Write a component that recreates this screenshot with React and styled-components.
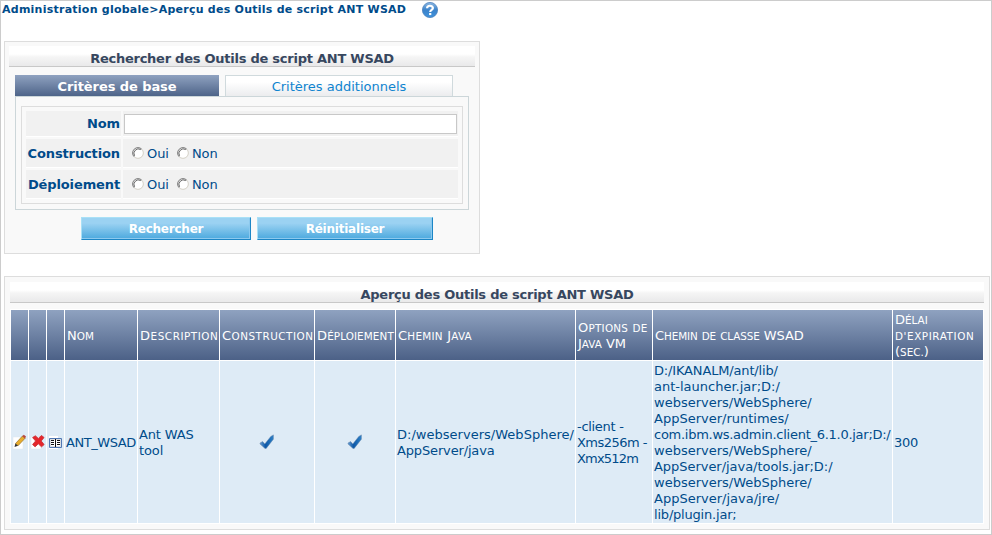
import React from "react";
import styled, { createGlobalStyle } from "styled-components";

const Global = createGlobalStyle`
  *, *::before, *::after { box-sizing: border-box; }
  html, body { margin: 0; padding: 0; background: #fff; }
  body {
    font-family: "DejaVu Sans", Verdana, sans-serif;
    font-size: 13px;
    line-height: 16px;
    color: #004b8a;
  }
`;

const Page = styled.div`
  width: 992px;
  height: 535px;
  border: 1px solid #ccc;
  padding: 0 1px 0 3px;
  overflow: hidden;
`;

const Breadcrumb = styled.header`
  display: flex;
  align-items: center;
  gap: 14px;
  height: 18px;
  margin: 0 0 22px -2px;
  font-size: 11px;
  font-weight: bold;
  white-space: nowrap;
`;

const Crumbs = styled.span`
  width: 406px;
  height: 18px;
  line-height: 17px;
  letter-spacing: 0.245px;
`;

const Panel = styled.section`
  width: ${(p) => p.$w}px;
  height: ${(p) => p.$h}px;
  margin-bottom: 22px;
  border: 1px solid #ddd;
  background: #f9f9f9;
  padding: ${(p) => p.$pad};
`;

const Title = styled.h2`
  margin: 0;
  height: 21px;
  border-bottom: 1px solid #c8c8c8;
  background: linear-gradient(#fff 0, #fff 40%, #f5f5f5 55%, #e9e9ea 100%);
  color: #37475f;
  font-size: 13px;
  line-height: 25px;
  font-weight: bold;
  text-align: center;
  white-space: nowrap;
  letter-spacing: -0.25px;
`;

const Tabs = styled.div`
  display: flex;
  gap: 6px;
  margin: 8px 0 0 6px;
`;

const Tab = styled.div`
  width: ${(p) => p.$w}px;
  height: 21px;
  line-height: 22px;
  text-align: center;
  white-space: nowrap;
  letter-spacing: ${(p) => (p.$active ? "-0.08px" : "0")};
  color: ${(p) => (p.$active ? "#fff" : "#0f84cf")};
  font-weight: ${(p) => (p.$active ? "bold" : "normal")};
  border: 1px solid ${(p) => (p.$active ? "transparent" : "#d0dadd")};
  border-bottom: 0;
  background: ${(p) =>
    p.$active
      ? "linear-gradient(#8fa2c0, #4e6489) border-box"
      : "linear-gradient(#fff 30%, #ebecee)"};
`;

const TabBody = styled.div`
  width: 454px;
  height: 114px;
  margin-left: 6px;
  padding: 9px 5px 5px;
  border: 1px solid #ccd6d9;
`;

const Criteria = styled.div`
  display: grid;
  grid-template-columns: 95px 335px;
  grid-template-rows: 26px 29px 29px;
  gap: 2px;
  height: 98px;
  padding: 4px;
  border: 1px solid #ddd;
`;

const Label = styled.label`
  display: flex;
  align-items: center;
  justify-content: flex-end;
  padding: ${(p) => (p.$low ? "2px 1px 0 0" : "0 1px 0 0")};
  background: #f1f1f1;
  border-bottom: 1px solid #fff;
  font-weight: bold;
  white-space: nowrap;
  letter-spacing: -0.12px;
`;

const Field = styled.div`
  display: flex;
  align-items: ${(p) => (p.$radios ? "center" : "flex-start")};
  padding: ${(p) => (p.$radios ? "1px 0 0 9px" : "3px 1px 0")};
  background: #f1f1f1;
  border-bottom: 1px solid #fff;
`;

const Input = styled.input`
  width: 333px;
  height: 20px;
  border: 1px solid #c8c8c8;
  background: #fff;
  padding: 0 3px;
  font: inherit;
  outline: 0;
`;

const Option = styled.span`
  display: flex;
  align-items: flex-start;
  gap: 3px;
  width: 45px;
  white-space: nowrap;
  letter-spacing: -0.1px;

  svg { margin-top: 1px; }
`;

const Buttons = styled.div`
  display: flex;
  gap: 6px;
  margin: 7px 0 0 72px;
`;

const Button = styled.button`
  width: ${(p) => p.$w}px;
  height: 23px;
  padding: 1px 0 0;
  border: 1px solid;
  border-color: #a9e0f6 #1c86c6 #1c86c6 #a9e0f6;
  box-shadow: inset -1px -1px #8cc9ee;
  background: linear-gradient(#9bd2f2 25%, #4ca9de);
  color: #fff;
  font: bold 12px/20px "DejaVu Sans", Verdana, sans-serif;
  letter-spacing: -0.22px;
`;

const Table = styled.div`
  display: grid;
  grid-template-columns: 17px 17px 17px 72px 81px 94px 80px 179px 76px 239px 90px;
  grid-template-rows: 50px 162px;
  gap: 1px;
  width: 974px;
  margin-top: 6px;
  padding: 1px;
  background: #fff;
`;

const Head = styled.div`
  display: flex;
  flex-direction: column;
  justify-content: center;
  padding: 2px 0 0 2px;
  background: linear-gradient(#8fa2c0, #4c6187);
  color: #fff;
`;

const Small = styled.span`
  font-size: 10.4px;
  text-transform: uppercase;
`;

const Cell = styled.div`
  display: flex;
  flex-direction: column;
  justify-content: center;
  align-items: ${(p) => (p.$icon ? "center" : "flex-start")};
  padding: ${(p) => (p.$icon ? "0" : "2px 0 0 1px")};
  background: #deebf6;
`;

const Line = styled.span`
  display: block;
  height: 16px;
  white-space: nowrap;
  letter-spacing: ${(p) => p.$ls || 0}px;
`;

const HelpIcon = () => (
  <svg width="16" height="16" viewBox="0 0 16 16">
    <defs>
      <linearGradient id="help" x1="0" y1="0" x2="0" y2="1">
        <stop offset="0" stopColor="#8fb9e3" />
        <stop offset=".5" stopColor="#3b83cb" />
        <stop offset="1" stopColor="#3f93dc" />
      </linearGradient>
    </defs>
    <circle cx="8" cy="8" r="7.6" fill="url(#help)" stroke="#4c82bd" strokeWidth=".8" />
    <path d="M5.1 6.3C5.1 2.9 10.9 3 10.9 6.1C10.9 8 8.2 7.9 8.2 10" fill="none" stroke="#fff" strokeWidth="2.2" />
    <rect x="7.1" y="11" width="2.2" height="2.1" fill="#fff" />
  </svg>
);

const Radio = () => (
  <svg width="12" height="12" viewBox="0 0 12 12">
    <circle cx="6" cy="6" r="5" fill="#fff" />
    <path d="M2.2 9.8A5.3 5.3 0 0 1 9.8 2.2" fill="none" stroke="#777" />
    <path d="M2.6 8.8A4.5 4.5 0 0 1 8.8 2.6" fill="none" stroke="#444" strokeWidth=".8" />
    <path d="M9.8 2.2A5.3 5.3 0 0 1 2.2 9.8" fill="none" stroke="#d6d2c8" />
  </svg>
);

const EditIcon = () => (
  <svg width="15" height="16" viewBox="0 0 15 16">
    <path d="M1 3h7l3 3v9H1z" fill="#fff" stroke="#dce5ee" strokeWidth=".5" />
    <path d="M3.5 9.5L10.5 2L13.3 4L6 11.8z" fill="#e8ad2c" stroke="#8a651f" strokeWidth=".6" />
    <path d="M10.2 2.3L11.8 .8L14 2.6L12.9 4.4z" fill="#b74b43" />
    <path d="M3.4 9.5L6 11.8L2.5 13z" fill="#333" />
  </svg>
);

const DeleteIcon = () => (
  <svg width="15" height="16" viewBox="0 0 15 16">
    <path d="M1 3h10v12H1z" fill="#fff" stroke="#dce5ee" strokeWidth=".5" />
    <path d="M2.6 3.6L5.3 1.8L8.3 4.4L11.5 1.5L14 3.5L11.2 7L14.1 10.6L11.5 12.8L8.3 9.8L5.1 12.8L2.6 10.5L5.6 7z" fill="#e5262b" stroke="#c9333a" strokeWidth=".9" />
  </svg>
);

const BookIcon = () => (
  <svg width="15" height="15" viewBox="0 0 15 15">
    <path d="M1 1h9v13H1z" fill="#fff" />
    <path d="M1.5 3.5h12v9h-12z" fill="#fff" stroke="#5178b4" />
    <path d="M2 4.5h11M2.5 4v8M12.5 4v8M2 11.5h11" stroke="#d9dde2" />
    <path d="M3 5.5h3M3 7.5h3M3 9.5h3M9 5.5h3M9 7.5h3M9 9.5h3M7.5 4v8" stroke="#111" />
  </svg>
);

const CheckIcon = () => (
  <svg width="16" height="16" viewBox="0 0 16 16">
    <defs>
      <linearGradient id="check" x1="0" y1="0" x2="1" y2="0">
        <stop offset="0" stopColor="#6aa0d4" />
        <stop offset=".4" stopColor="#0d58a8" />
        <stop offset="1" stopColor="#2d80c6" />
      </linearGradient>
    </defs>
    <path d="M1 9L3.6 7.6L5.8 10L11.8 2.4L14.4 .9V5.2L7.2 14.4H6L1 10z" fill="url(#check)" stroke="#6585ab" strokeWidth=".5" />
  </svg>
);

// Each text line is [text, letter spacing].
const columns = [
  { head: [], icon: <EditIcon /> },
  { head: [], icon: <DeleteIcon /> },
  { head: [], icon: <BookIcon /> },
  { head: [["Nom", 0]], lines: [["ANT_WSAD", -0.45]] },
  { head: [["Description", 0.55]], lines: [["Ant WAS", -0.15], ["tool", -0.1]] },
  { head: [["Construction", 0.5]], icon: <CheckIcon /> },
  { head: [["Déploiement", 0.1]], icon: <CheckIcon /> },
  { head: [["Chemin Java", 0.25]], lines: [["D:/webservers/WebSphere/", 0.02], ["AppServer/java", -0.15]] },
  {
    head: [["Options de", 0.25], ["Java VM", 0]],
    lines: [["-client -", -0.3], ["Xms256m -", -0.54], ["Xmx512m", -0.8]],
  },
  {
    head: [["Chemin de classe WSAD", -0.1]],
    lines: [
      ["D:/IKANALM/ant/lib/", -0.16],
      ["ant-launcher.jar;D:/", 0],
      ["webservers/WebSphere/", 0],
      ["AppServer/runtimes/", 0],
      ["com.ibm.ws.admin.client_6.1.0.jar;D:/", -0.27],
      ["webservers/WebSphere/", 0],
      ["AppServer/java/tools.jar;D:/", -0.04],
      ["webservers/WebSphere/", 0],
      ["AppServer/java/jre/", 0],
      ["lib/plugin.jar;", -0.2],
    ],
  },
  { head: [["Délai", 0], ["d'expiration", 0.58], ["(sec.)", 0]], lines: [["300", -0.3]] },
];

const SmallCaps = ({ text }) =>
  text
    .split(/([a-zà-ÿ'.]+)/)
    .filter(Boolean)
    .map((run, i) => (/^[a-zà-ÿ'.]/.test(run) ? <Small key={i}>{run}</Small> : run));

const YesNo = () => (
  <Field $radios>
    <Option><Radio />Oui</Option>
    <Option><Radio />Non</Option>
  </Field>
);

export default function App() {
  return (
    <>
      <Global />
      <Page>
        <Breadcrumb>
          <Crumbs>Administration globale&gt;Aperçu des Outils de script ANT WSAD</Crumbs>
          <HelpIcon />
        </Breadcrumb>
        <Panel $w={476} $h={213} $pad="4px">
          <Title>Rechercher des Outils de script ANT WSAD</Title>
          <Tabs>
            <Tab $active $w={204}>Critères de base</Tab>
            <Tab $w={228}>Critères additionnels</Tab>
          </Tabs>
          <TabBody>
            <Criteria>
              <Label>Nom</Label>
              <Field><Input aria-label="Nom" /></Field>
              <Label $low>Construction</Label>
              <YesNo />
              <Label $low>Déploiement</Label>
              <YesNo />
            </Criteria>
          </TabBody>
          <Buttons>
            <Button $w={170}>Rechercher</Button>
            <Button $w={176}>Réinitialiser</Button>
          </Buttons>
        </Panel>
        <Panel $w={986} $h={254} $pad="5px">
          <Title>Aperçu des Outils de script ANT WSAD</Title>
          <Table>
            {columns.map((c, i) => (
              <Head key={i}>
                {c.head.map(([text, ls]) => (
                  <Line key={text} $ls={ls}><SmallCaps text={text} /></Line>
                ))}
              </Head>
            ))}
            {columns.map((c, i) => (
              <Cell key={i} $icon={!!c.icon}>
                {c.icon || c.lines.map(([text, ls], n) => <Line key={n} $ls={ls}>{text}</Line>)}
              </Cell>
            ))}
          </Table>
        </Panel>
      </Page>
    </>
  );
}
